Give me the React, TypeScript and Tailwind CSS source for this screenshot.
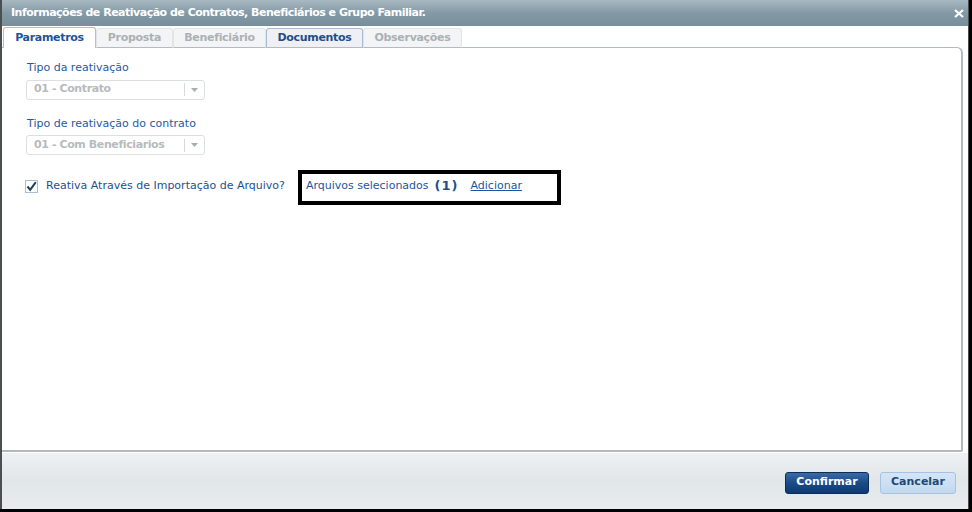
import React from "react";

const font = { fontFamily: '"DejaVu Sans", Verdana, sans-serif' };

function Select({ value }: { value: string }) {
  return (
    <div className="-ml-px flex h-[20px] w-[179px] items-center rounded-[3px] border border-[#dcdfe0] bg-white">
      <div className="flex-1 pl-[7px] text-[11px] font-bold tracking-[-0.4px] text-[#b7bbbd]">{value}</div>
      <div className="h-[13px] w-px bg-[#d6d9da]" />
      <div className="flex w-[19px] items-center justify-center">
        <svg width="7" height="4" viewBox="0 0 7 4">
          <path d="M0 0 H7 L3.5 4 Z" fill="#a9adb0" />
        </svg>
      </div>
    </div>
  );
}

type Tab = { label: string; w: number; kind: "active" | "hl" | "off" };
const tabs: Tab[] = [
  { label: "Parametros", w: 93, kind: "active" },
  { label: "Proposta", w: 77, kind: "off" },
  { label: "Beneficiário", w: 93, kind: "off" },
  { label: "Documentos", w: 97, kind: "hl" },
  { label: "Observações", w: 99, kind: "off" },
];

export default function App() {
  return (
    <div className="h-[512px] w-[972px] bg-black" style={font}>
      <div className="flex h-[509px] w-[969px] flex-col border-l-2 border-r border-[#4a4f52] bg-white">
        {/* Title bar */}
        <div className="flex h-[26px] shrink-0 items-center justify-between bg-gradient-to-b from-[#a9b9c3] via-[#8499a6] to-[#788e9b] pl-[9px] pr-[4px]">
          <span className="text-[11px] font-bold tracking-[-0.5px] text-white">
            Informações de Reativação de Contratos, Beneficiários e Grupo Familiar.
          </span>
          <svg width="10" height="9" viewBox="0 0 10 9">
            <path d="M1 1 L9 8 M9 1 L1 8" stroke="#ffffff" strokeWidth="2.2" />
          </svg>
        </div>

        {/* Body */}
        <div className="flex flex-1 flex-col pt-[1px] pr-[5px]">
          {/* Tabs */}
          <div className="relative z-10 flex h-[21px] items-end pl-[1px]">
            {tabs.map((t) => (
              <div
                key={t.label}
                style={{ width: t.w }}
                className={
                  t.kind === "active"
                    ? "flex h-[21px] items-center justify-center rounded-t-[3px] border border-b-0 border-[#a8c3dd] bg-white text-[11px] font-bold tracking-[-0.3px] text-[#1d5596]"
                    : t.kind === "hl"
                    ? "flex h-[20px] items-center justify-center rounded-t-[3px] border border-[#a9bbd2] border-b-[#b4bbbe] bg-[#eef0f3] text-[11px] font-bold tracking-[-0.3px] text-[#1d4f8a]"
                    : "flex h-[20px] items-center justify-center rounded-t-[3px] border border-[#e2e5e7] border-b-[#b4bbbe] bg-[#f3f4f5] text-[11px] font-bold tracking-[-0.3px] text-[#aab1b4]"
                }
              >
                {t.label}
              </div>
            ))}
          </div>

          {/* Panel */}
          <div className="-mt-px flex flex-1 flex-col rounded-tr-[6px] rounded-br-[2px] border-t border-r-2 border-b-2 border-[#b2b9bc] pl-[25px] pt-[12px] text-[#1f5aa0]">
            <div className="text-[11px]">Tipo da reativação</div>
            <div className="mt-[3px]">
              <Select value="01 - Contrato" />
            </div>
            <div className="mt-[16px] text-[11px]">Tipo de reativação do contrato</div>
            <div className="mt-[3px]">
              <Select value="01 - Com Beneficiarios" />
            </div>

            <div className="mt-[15px] flex items-start">
              <div className="-ml-[2px] mt-[8px] flex items-center">
                <div className="flex h-[13px] w-[13px] items-center justify-center border border-[#a9bfd4] bg-white">
                  <svg width="11" height="11" viewBox="0 0 11 11">
                    <path d="M1.5 5.5 L4.2 8.8 L9.8 1.2" stroke="#213f63" strokeWidth="2" fill="none" />
                  </svg>
                </div>
                <span className="ml-[8px] text-[11px] text-[#1f4f8f]">
                  Reativa Através de Importação de Arquivo?
                </span>
              </div>
              <div className="ml-[13px] flex h-[35px] w-[263px] items-start border-4 border-black pl-[4px] pt-[2px]">
                <span className="mt-[2px] text-[11px] text-[#1f55a0]">Arquivos selecionados</span>
                <span className="ml-[6px] text-[13px] font-bold tracking-[1px] text-[#1f4f8f]">(1)</span>
                <span className="ml-[12px] mt-[2px] text-[11px] text-[#1f55a0] underline">Adicionar</span>
              </div>
            </div>
          </div>
        </div>

        {/* Footer */}
        <div className="flex h-[57px] shrink-0 items-center justify-end gap-[11px] border-t border-white bg-gradient-to-b from-[#eef1f3] via-[#e1e6e9] to-[#e8ecef] pr-[12px] pt-[3px]">
          <div className="flex h-[22px] w-[84px] items-center justify-center rounded-[3px] border border-[#0c2d5a] bg-gradient-to-b from-[#3b6ba6] via-[#1a4b87] to-[#0e3a72] text-[11px] font-bold text-white">
            Confirmar
          </div>
          <div className="flex h-[22px] w-[76px] items-center justify-center rounded-[3px] border border-[#a6c2e2] bg-gradient-to-b from-[#d5e5f6] to-[#c4d9ef] text-[11px] font-bold text-[#1f4876]">
            Cancelar
          </div>
        </div>
      </div>
    </div>
  );
}
